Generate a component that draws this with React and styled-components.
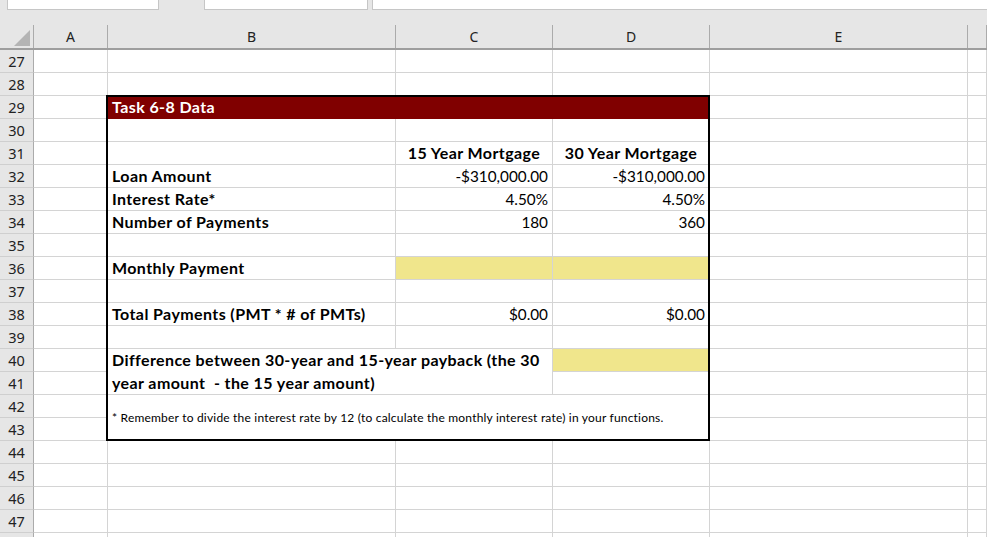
import React from "react";
import styled, { createGlobalStyle } from "styled-components";

const GRID = "#d4d4d4";
const HEAD_BG = "#e6e6e6";
const HEAD_LINE = "#ababab";
const MAROON = "#800000";
const YELLOW = "#f0e68c";
const COLUMNS = "34px 74px 288px 157px 157px 258px 1fr";

const GlobalStyle = createGlobalStyle`
  html, body {
    margin: 0;
    padding: 0;
    background: #fff;
  }
`;

const letters = ["A", "B", "C", "D", "E", ""];
const colIndex = { A: 2, B: 3, C: 4, D: 5, E: 6, F: 7 };

const cells = {
  "29B": { span: 3, fill: MAROON, line: MAROON, color: "#fff", bold: true, text: "Task 6-8 Data" },
  "31C": { bold: true, align: "center", text: "15 Year Mortgage" },
  "31D": { bold: true, align: "center", text: "30 Year Mortgage" },
  "32B": { bold: true, text: "Loan Amount" },
  "32C": { align: "right", text: "-$310,000.00" },
  "32D": { align: "right", text: "-$310,000.00" },
  "33B": { bold: true, text: "Interest Rate*" },
  "33C": { align: "right", text: "4.50%" },
  "33D": { align: "right", text: "4.50%" },
  "34B": { bold: true, text: "Number of Payments" },
  "34C": { align: "right", text: "180" },
  "34D": { align: "right", text: "360" },
  "36B": { bold: true, text: "Monthly Payment" },
  "36C": { fill: YELLOW },
  "36D": { fill: YELLOW },
  "38B": { bold: true, text: "Total Payments (PMT * # of PMTs)" },
  "38C": { align: "right", text: "$0.00" },
  "38D": { align: "right", text: "$0.00" },
  "40B": {
    span: 2,
    rowSpan: 2,
    bold: true,
    lines: [
      "Difference between 30-year and 15-year payback (the 30",
      "year amount  - the 15 year amount)",
    ],
  },
  "40D": { fill: YELLOW },
  "42B": {
    span: 3,
    rowSpan: 2,
    small: true,
    text: "* Remember to divide the interest rate by 12 (to calculate the monthly interest rate) in your functions.",
  },
};

const covered = new Set(["29C", "29D", "40C", "41B", "41C", "42C", "42D", "43B", "43C", "43D"]);

// row 48 is only a sliver at the bottom edge, its number is not shown
const rows = [];
for (let r = 27; r <= 48; r++) rows.push(r);

const App = () => {
  return (
    <>
      <GlobalStyle />
      <Page>
        <TopBar>
          <NameBox />
          <FormulaTools />
          <FormulaInput />
        </TopBar>
        <Spacer />
        <HeaderRow>
          <Corner>
            <SelectAll />
          </Corner>
          {letters.map((l, i) => (
            <ColHead key={i}>{l}</ColHead>
          ))}
        </HeaderRow>
        <Sheet>
          {rows.map((r) => {
            const gr = r - 26;
            return (
              <React.Fragment key={r}>
                <RowHead style={{ gridRow: gr }}>{r < 48 ? r : ""}</RowHead>
                {Object.keys(colIndex).map((c) => {
                  const key = `${r}${c}`;
                  if (covered.has(key)) return null;
                  const cell = cells[key] || {};
                  return (
                    <Cell
                      key={key}
                      $row={gr}
                      $col={colIndex[c]}
                      $span={cell.span || 1}
                      $rowSpan={cell.rowSpan || 1}
                      $fill={cell.fill}
                      $line={cell.line}
                      $color={cell.color}
                      $bold={cell.bold}
                      $align={cell.align}
                      $small={cell.small}
                    >
                      {cell.lines ? (
                        <Wrapped>
                          {cell.lines.map((t, i) => (
                            <div key={i}>{t}</div>
                          ))}
                        </Wrapped>
                      ) : (
                        cell.text
                      )}
                    </Cell>
                  );
                })}
              </React.Fragment>
            );
          })}
          <Frame />
        </Sheet>
      </Page>
    </>
  );
};

export default App;

const Page = styled.div`
  width: 987px;
  height: 537px;
  overflow: hidden;
  background: #fff;
  font-family: Lato, "Open Sans", sans-serif;
`;

const TopBar = styled.div`
  display: flex;
  height: 10px;
  background: ${HEAD_BG};
`;

const Field = styled.div`
  box-sizing: border-box;
  height: 10px;
  background: #fff;
  border: 1px solid #c6c6c6;
  border-top: none;
`;

const NameBox = styled(Field)`
  margin-left: 7px;
  width: 152px;
`;

const FormulaTools = styled(Field)`
  margin-left: 45px;
  width: 164px;
`;

const FormulaInput = styled(Field)`
  margin-left: 4px;
  flex: 1;
  border-right: none;
`;

const Spacer = styled.div`
  height: 15px;
  background: ${HEAD_BG};
`;

const HeaderRow = styled.div`
  display: grid;
  grid-template-columns: ${COLUMNS};
  height: 25px;
  box-sizing: border-box;
  background: ${HEAD_BG};
  border-bottom: 2px solid #9e9e9e;
`;

const Corner = styled.div`
  border-right: 1px solid ${HEAD_LINE};
  display: flex;
  align-items: flex-end;
  justify-content: flex-end;
  padding: 0 3px 2px 0;
`;

const SelectAll = styled.div`
  width: 0;
  height: 0;
  border-left: 16px solid transparent;
  border-bottom: 16px solid #b4b4b4;
`;

const ColHead = styled.div`
  border-right: 1px solid ${HEAD_LINE};
  display: flex;
  align-items: center;
  justify-content: center;
  font-family: "Noto Sans", "Open Sans", sans-serif;
  font-size: 14px;
  color: #222;
`;

const Sheet = styled.div`
  display: grid;
  grid-template-columns: ${COLUMNS};
  grid-auto-rows: 23px;
`;

const RowHead = styled.div`
  grid-column: 1;
  box-sizing: border-box;
  background: ${HEAD_BG};
  border-right: 1px solid ${HEAD_LINE};
  border-bottom: 1px solid #cfcfcf;
  display: flex;
  align-items: center;
  justify-content: center;
  font-family: "Noto Sans", "Open Sans", sans-serif;
  font-size: 14.5px;
  color: #222;
`;

const Cell = styled.div`
  grid-column: ${(p) => p.$col} / span ${(p) => p.$span};
  grid-row: ${(p) => p.$row} / span ${(p) => p.$rowSpan};
  box-sizing: border-box;
  min-width: 0;
  border-right: 1px solid ${(p) => p.$line || GRID};
  border-bottom: 1px solid ${(p) => p.$line || GRID};
  background: ${(p) => p.$fill || "#fff"};
  color: ${(p) => p.$color || "#000"};
  display: flex;
  align-items: center;
  justify-content: ${(p) =>
    p.$align === "right" ? "flex-end" : p.$align === "center" ? "center" : "flex-start"};
  padding: 0 4px ${(p) => (p.$bold ? "2px" : "0")};
  font-size: ${(p) => (p.$small ? "12px" : p.$bold ? "16px" : "15.3px")};
  letter-spacing: ${(p) => (p.$small ? "0.2px" : p.$bold ? "0.4px" : "0")};
  font-weight: ${(p) => (p.$bold ? 700 : 400)};
  white-space: nowrap;
`;

const Wrapped = styled.div`
  display: flex;
  flex-direction: column;
  line-height: 23px;
  white-space: pre;
`;

const Frame = styled.div`
  grid-column: 3 / span 3;
  grid-row: 3 / span 15;
  margin: -1px 0 0 -2px;
  border: 2px solid #000;
  pointer-events: none;
  z-index: 1;
`;
